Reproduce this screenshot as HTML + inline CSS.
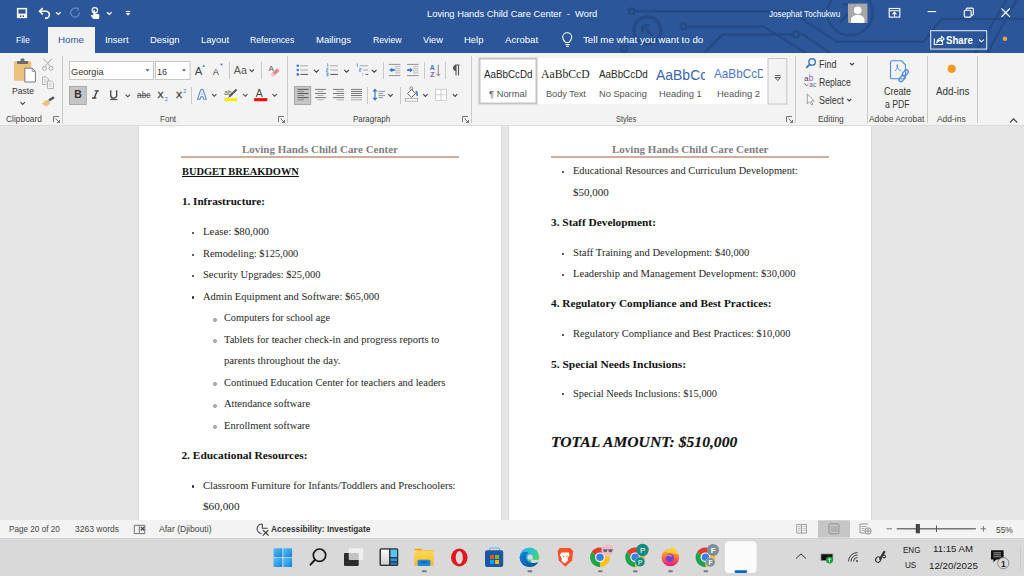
<!DOCTYPE html>
<html><head><meta charset="utf-8">
<style>
*{margin:0;padding:0;box-sizing:border-box}
html,body{width:1024px;height:576px;overflow:hidden;background:#e6e6e6;font-family:"Liberation Sans",sans-serif}
.a{position:absolute;white-space:nowrap}
#title{position:absolute;left:0;top:0;width:1024px;height:53px;background:#2b579a}
#ribbon{position:absolute;left:0;top:53px;width:1024px;height:73px;background:#f3f3f3;border-bottom:1px solid #dcdcdc}
#doc{position:absolute;left:0;top:126px;width:1024px;height:394px;background:#e6e6e6}
.page{position:absolute;top:126px;width:362px;height:394px;background:#fff;box-shadow:-1px 0 0 #dcdcdc,1px 0 0 #dcdcdc}
#status{position:absolute;left:0;top:520px;width:1024px;height:18px;background:#f3f3f3}
#task{position:absolute;left:0;top:538px;width:1024px;height:38px;background:#d9d9d9;border-top:1px solid #d0d0d0}
.tt{color:#fff;font-size:10px}
.tab{color:#fff;font-size:10.5px;top:34px}
.gl{font-size:9px;color:#444;top:115px}
.sep{position:absolute;width:1px;background:#c8c8c8}
.d{position:absolute;white-space:nowrap;font-family:"Liberation Serif",serif;color:#1a1a1a;font-size:10px}
.b{font-weight:bold}
.hdr{font-family:"Liberation Serif",serif;font-weight:bold;color:#808080;font-size:10px}
.st{font-size:9px;color:#444}
.u{position:absolute;white-space:nowrap;line-height:1;transform-origin:0 0;font-family:"Liberation Sans",sans-serif}
.d{line-height:1}
.d{transform-origin:0 0}
.bul{position:absolute;width:2.3px;height:2.3px;background:#2a2a2a;border-radius:50%}
.sub{position:absolute;width:3.8px;height:3.8px;background:#b8b8b8;border:0.7px solid #999;border-radius:50%}
</style></head><body>
<div id="title"></div>
<svg class="a" style="left:0;top:0" width="1024" height="53" viewBox="0 0 1024 53">
 <g fill="none" stroke="#244b86" stroke-width="2.5">
  <circle cx="631.7" cy="11.3" r="2.8"/>
  <path d="M634.5 11.3H790L837 41.8H923.6L941.5 19H1024"/>
  <circle cx="647.3" cy="30.3" r="13.5" stroke-width="3.2"/>
  <path d="M642.5 25.5l10 10M642.5 25.5v7M642.5 25.5h7" stroke-width="3"/>
  <circle cx="683.5" cy="26.4" r="2.8"/>
  <path d="M686.3 26.4H763.4L806 53"/>
  <circle cx="624" cy="48.8" r="2.8"/>
  <path d="M704 53L722.5 34.6H793.2"/>
  <circle cx="796" cy="34.6" r="2.8"/>
  <path d="M798.8 34.6H803.3L830 53"/>
  <circle cx="850" cy="13" r="22.5"/>
  <path d="M840 23L855 6M843 4.5h12v10"/>
  <path d="M975.3 53L1006.3 0M987.3 53L1016.5 0"/>
 </g>
 <!-- QAT save -->
 <rect x="16.9" y="7.9" width="10.2" height="10.2" fill="#fff"/>
 <rect x="18.4" y="9.4" width="7.2" height="4.2" fill="#2b579a"/>
 <rect x="20" y="15.3" width="1.3" height="1.8" fill="#2b579a"/><rect x="22.7" y="15.3" width="1.3" height="1.8" fill="#2b579a"/>
 <!-- undo -->
 <path d="M39.8 11.3H46a3.4 3.4 0 0 1 0 6.8H45" fill="none" stroke="#fff" stroke-width="1.6"/>
 <path d="M42.8 8.1L39.6 11.3L42.8 14.5" fill="none" stroke="#fff" stroke-width="1.6"/>
 <path d="M56 12.2l2.3 2.2 2.3-2.2" fill="none" stroke="#fff" stroke-width="1.3"/>
 <!-- redo faded -->
 <path d="M79.4 12.2a4.4 4.4 0 1 1 -2.6 -3.6" fill="none" stroke="#5e86c0" stroke-width="1.3"/><path d="M76.3 7.6l2.2 1.2-1.3 2.2" fill="none" stroke="#5e86c0" stroke-width="1.2"/>
 <!-- touch mode -->
 <circle cx="94.8" cy="10.3" r="2.7" fill="none" stroke="#fff" stroke-width="1.1"/>
 <path d="M93.4 19L91 15.9Q90.5 15 91.5 14.7L93.3 15.6V10.8Q93.3 9.9 94.2 9.9Q95.1 9.9 95.1 10.8V13.4L98.2 14.1Q99.6 14.5 99.4 16L99 19Z" fill="#fff"/>
 <path d="M107 12.2l2.3 2.2 2.3-2.2" fill="none" stroke="#fff" stroke-width="1.3"/>
 <!-- customize -->
 <path d="M125.8 11.4h4.4" stroke="#fff" stroke-width="1"/>
 <path d="M125.6 13h4.8l-2.4 2.6z" fill="#fff"/>
 <!-- avatar -->
 <rect x="848" y="3.6" width="19.4" height="19.3" fill="#a8a8a8"/>
 <circle cx="857.7" cy="10.2" r="3.8" fill="#fff"/>
 <path d="M851 22.9v-3.2c0-3 3-4.8 6.7-4.8s6.7 1.8 6.7 4.8v3.2z" fill="#fff"/>
 <!-- ribbon display options -->
 <g fill="none" stroke="#fff" stroke-width="1.1">
  <rect x="889.2" y="8.5" width="10.6" height="8.6"/>
  <path d="M889.2 10.8h10.6M894.5 16.6v-4.2M892.5 14.3l2-2 2 2"/>
 </g>
 <!-- min restore close -->
 <path d="M927.6 11.6h8.6" stroke="#fff" stroke-width="1.1"/>
 <g fill="none" stroke="#fff" stroke-width="1.1">
  <rect x="964.3" y="10.3" width="6.8" height="6.8" rx="1"/>
  <path d="M966.3 10.3v-1.2a1 1 0 0 1 1-1h5a1 1 0 0 1 1 1v5a1 1 0 0 1-1 1h-1.2"/>
  <path d="M1001.5 8.5l8.4 8.4M1009.9 8.5l-8.4 8.4"/>
 </g>
 <!-- share -->
 <rect x="930.7" y="30.7" width="56" height="18.4" fill="none" stroke="#e8eef7" stroke-width="1"/>
 <g fill="none" stroke="#fff" stroke-width="1.1">
  <path d="M934.3 38.5v6h8.2v-3.3"/>
  <path d="M936.8 42.8c0.3-3 2.2-4.6 4.6-4.6v-1.9l2.8 2.6-2.8 2.6v-1.6c-1.8 0-3.3 1-4.6 2.9z" stroke-linejoin="round"/>
 </g>
 <path d="M979 39.6l2.4 2.2 2.4-2.2" fill="none" stroke="#fff" stroke-width="1.1"/>
 <circle cx="1004.9" cy="38.8" r="2.2" fill="#f2a33a"/>
 <!-- lightbulb -->
 <g fill="none" stroke="#fff" stroke-width="1.1">
  <path d="M565.5 42.5c-1.2-1.4-2.8-2.8-2.8-5.2a4.5 4.5 0 0 1 9 0c0 2.4-1.6 3.8-2.8 5.2z"/>
  <path d="M565.5 44.5h4M566 46.3h3"/>
 </g>
</svg>
<!-- tabs -->
<div class="a" style="left:48px;top:27px;width:47px;height:26px;background:#f3f3f3"></div>

<div id="ribbon"></div>
<!--RIB-->
<svg class="a" style="left:0;top:0" width="1024" height="130" viewBox="0 0 1024 130">
 <!-- separators -->
 <g stroke="#c9c9c9" stroke-width="1">
  <path d="M62.5 56V123M287.5 56V123M471.5 56V123M795.5 56V123M867.5 56V123M927.5 56V123M977.5 56V123"/>
  <path d="M229.5 62V79M261.5 62V79M191.5 87V104M383.5 62V79M424.5 62V79M445.5 62V79M367.5 87V104M400.5 87V104"/>
 </g>
 <!-- Paste -->
 <rect x="14" y="61.3" width="17.3" height="19.5" rx="1.2" fill="#ebc27e"/>
 <rect x="17" y="61" width="11.2" height="3" rx="0.8" fill="#6b6b6b"/>
 <rect x="20.6" y="58.6" width="3.8" height="3" rx="1" fill="#6b6b6b"/>
 <path d="M24.8 68.2H32.2L35.4 71.4V82H24.8Z" fill="#fff" stroke="#7a7a7a" stroke-width="1"/>
 <path d="M32.2 68.2V71.4H35.4" fill="none" stroke="#7a7a7a" stroke-width="0.8"/>
 <path d="M20.5 102.2l2.2 2.2 2.2-2.2" fill="none" stroke="#444" stroke-width="1.1"/>
 <!-- cut -->
 <g fill="none" stroke="#a8a8a8" stroke-width="1">
  <path d="M43.5 58.5L50.5 66.5M52 58.5L45 66.5"/>
  <circle cx="44.5" cy="68.3" r="1.9"/><circle cx="51" cy="68.3" r="1.9"/>
 </g>
 <!-- copy -->
 <g fill="#f3f3f3" stroke="#b0b0b0" stroke-width="0.9">
  <path d="M42.5 77H46.5L48.5 79V84.5H42.5Z"/>
  <path d="M47.5 81H51.5L53.5 83V88.5H47.5Z"/>
  <path d="M43.8 80h3M43.8 82h3M48.8 84h3M48.8 86h3" stroke-width="0.6"/>
 </g>
 <!-- format painter -->
 <path d="M48.2 99.6L53.2 96.2L54.6 98.2L49.6 101.6Z" fill="#555"/>
 <path d="M46.8 99.8L50.2 103.4L46 106.8L41.6 103.4Z" fill="#ebc27e"/>
 <path d="M47.6 100.6L49.2 102.4" stroke="#c99a4e" stroke-width="0.8"/>
 <!-- font boxes -->
 <rect x="69.5" y="61.5" width="84" height="18" fill="#fff" stroke="#c6c6c6"/>
 <rect x="155.5" y="61.5" width="34.5" height="18" fill="#fff" stroke="#c6c6c6"/>
 <path d="M145.5 69.3h4l-2 2.2z" fill="#555"/>
 <path d="M182 69.3h4l-2 2.2z" fill="#555"/>
 <!-- grow / shrink -->
 <text x="194.8" y="74.8" font-family="Liberation Sans" font-size="11.3" fill="#444">A</text>
 <path d="M202.2 66.8h3l-1.5-2z" fill="#3c78c8"/>
 <text x="212.8" y="74.8" font-family="Liberation Sans" font-size="9.3" fill="#444">A</text>
 <path d="M220 63.8h3l-1.5 2z" fill="#3c78c8"/>
 <text x="233.8" y="73.5" font-family="Liberation Sans" font-size="10" fill="#555" textLength="13" lengthAdjust="spacingAndGlyphs">Aa</text>
 <path d="M249.6 69.4l2.2 2.2 2.2-2.2" fill="none" stroke="#444" stroke-width="1.1"/>
 <!-- clear formatting -->
 <text x="268.5" y="70.7" font-family="Liberation Sans" font-size="8" fill="#555">A</text>
 <path d="M272.5 72.5L277 68.2L279.5 70.8L275 75.2Z" fill="#e8848c"/>
 <path d="M270.5 74.5L272.5 72.5L275 75.2L273 77Z" fill="#f4c0c4"/>
 <!-- B I U -->
 <rect x="69.5" y="86.5" width="16.8" height="18" fill="#c5c5c5" stroke="#ababab"/>
 <text x="74.2" y="98.2" font-family="Liberation Sans" font-weight="bold" font-size="10.4" fill="#333">B</text>
 <path d="M94.6 90.9H98.9M92 98H96.3M97.1 90.9L94.2 98" stroke="#444" stroke-width="1.4" fill="none"/>
 <path d="M110.7 90.3V95.2a3 3 0 0 0 6 0V90.3" fill="none" stroke="#444" stroke-width="1.3"/>
 <path d="M110 99.6h7.4" stroke="#444" stroke-width="1"/>
 <path d="M125.6 94.6l2.2 2.2 2.2-2.2" fill="none" stroke="#444" stroke-width="1.1"/>
 <text x="137" y="98" font-family="Liberation Sans" font-size="9.4" fill="#555" textLength="13.5" lengthAdjust="spacingAndGlyphs">abc</text>
 <path d="M137 95.3h13.6" stroke="#555" stroke-width="1"/>
 <text x="157.6" y="98.3" font-family="Liberation Sans" font-size="9" fill="#444" stroke="#444" stroke-width="0.35">X</text>
 <text x="164.8" y="100.8" font-family="Liberation Sans" font-size="5.5" fill="#3c78c8">2</text>
 <text x="176" y="98.3" font-family="Liberation Sans" font-size="9" fill="#444" stroke="#444" stroke-width="0.35">X</text>
 <text x="183.3" y="93.4" font-family="Liberation Sans" font-size="5.5" fill="#3c78c8">2</text>
 <!-- text effects -->
 <path d="M197.6 99.2L200.7 89.8Q201.9 88.8 203.1 89.8L206.2 99.2H203.7L202.9 96.7H200.9L200.1 99.2Z" fill="#f7f9fd" stroke="#4f88d2" stroke-width="1.1" stroke-linejoin="round"/>
 <path d="M201.2 94.8H202.6L201.9 92.4Z" fill="#4f88d2"/>
 <path d="M212.2 94.2l2.1 2.1 2.1-2.1" fill="none" stroke="#444" stroke-width="1.1"/>
 <!-- highlighter -->
 <text x="224.3" y="95" font-family="Liberation Sans" font-size="6.5" fill="#555">ab</text>
 <path d="M236.5 89.5L229.5 96.5" stroke="#555" stroke-width="2"/>
 <path d="M230 96L228.3 97.6" stroke="#555" stroke-width="1"/>
 <rect x="224.5" y="98.1" width="12.7" height="3.1" fill="#f6f000"/>
 <path d="M243.2 94.2l2.1 2.1 2.1-2.1" fill="none" stroke="#444" stroke-width="1.1"/>
 <!-- font color -->
 <text x="255.8" y="97.4" font-family="Liberation Sans" font-size="10.4" fill="#444">A</text>
 <rect x="254.2" y="98.1" width="13.1" height="3.1" fill="#ee1111"/>
 <path d="M272.6 94.2l2.1 2.1 2.1-2.1" fill="none" stroke="#444" stroke-width="1.1"/>
 <!-- launchers -->
 <g fill="none" stroke="#666" stroke-width="0.9">
  <path d="M53.5 122V116.5H59M55.5 118.5L59.5 122.5M59.5 120v2.5H57"/>
  <path d="M278.5 122V116.5H284M280.5 118.5L284.5 122.5M284.5 120v2.5H282"/>
  <path d="M462.5 122V116.5H468M464.5 118.5L468.5 122.5M468.5 120v2.5H466"/>
  <path d="M786.5 122V116.5H792M788.5 118.5L792.5 122.5M792.5 120v2.5H790"/>
 </g>
 <!-- bullets -->
 <g fill="#3c78c8"><circle cx="297.8" cy="65.8" r="1.3"/><circle cx="297.8" cy="70" r="1.3"/><circle cx="297.8" cy="74.4" r="1.3"/></g>
 <g stroke-width="1"><path d="M300.3 65.8h7.8M300.3 70h7.8" stroke="#a8a8a8"/><path d="M300.3 74.4h7.8" stroke="#555"/></g>
 <path d="M314 69.8l2.4 2.4 2.4-2.4" fill="none" stroke="#444" stroke-width="1.1"/>
 <!-- numbering -->
 <g fill="none" stroke="#4a84cf" stroke-width="0.7"><path d="M327 64.2l0.8-0.5v3.6M326.4 68.6h1.6v1.4h-1.6v1.6h1.8M326.4 72.8h1.7v1.5h-1.2M326.4 74.3h1.7v1.7h-1.8"/></g>
 <g stroke-width="1"><path d="M330.2 65.8h7.8M330.2 70h7.8" stroke="#a8a8a8"/><path d="M330.2 74.4h7.8" stroke="#555"/></g>
 <path d="M344.2 69.8l2.4 2.4 2.4-2.4" fill="none" stroke="#444" stroke-width="1.1"/>
 <!-- multilevel -->
 <g fill="none" stroke="#4a84cf" stroke-width="0.7"><path d="M356.6 64.2l0.8-0.5v3.3M359.4 68.5h1.6v1.3h-1.6v1.5h1.8"/><path d="M362.6 72.8v3" stroke="#9ab8e0"/></g>
 <g stroke-width="1"><path d="M359.5 65.8h8.5M363 70h5" stroke="#a8a8a8"/><path d="M365.5 74.4h2.8" stroke="#555"/></g>
 <path d="M371.8 69.8l2.4 2.4 2.4-2.4" fill="none" stroke="#444" stroke-width="1.1"/>
 <!-- indents -->
 <g stroke-width="0.9">
  <path d="M388.8 64.4h11.6M388.8 75.6h11.6M407 64.4h11.6M407 75.6h11.6" stroke="#888"/>
  <path d="M395 66.6h5.4M395 68.7h5.4M395 70.8h5.4M395 72.9h5.4M413 66.6h5.4M413 68.7h5.4M413 70.8h5.4M413 72.9h5.4" stroke="#b4b4b4"/>
 </g>
 <path d="M389.3 70l3-2.6v1.6h2.5v2h-2.5v1.6z" fill="#3c78c8"/>
 <path d="M412.8 70l-3-2.6v1.6h-2.6v2h2.6v1.6z" fill="#3c78c8"/>
 <!-- sort -->
 <text x="429.8" y="70" font-family="Liberation Sans" font-weight="bold" font-size="7" fill="#3c78c8">A</text>
 <text x="430.3" y="76.5" font-family="Liberation Sans" font-weight="bold" font-size="7" fill="#9050c0">Z</text>
 <path d="M438.3 64.8V75.8M436.5 73.8l1.8 2 1.8-2" fill="none" stroke="#777" stroke-width="0.9"/>
 <!-- pilcrow -->
 <path d="M455 65h4.5M456 65v10.6M458.5 65v10.6" stroke="#555" stroke-width="1.1"/>
 <path d="M456 65a3 3 0 0 0 0 6z" fill="#555"/>
 <!-- align buttons -->
 <rect x="294.5" y="86.5" width="16.2" height="18" fill="#c5c5c5" stroke="#ababab"/>
 <g stroke-width="1">
  <path d="M297.5 89.4h11M297.5 93.5h11M297.5 97.6h11" stroke="#555"/>
  <path d="M297.5 91.5h6.5M297.5 95.5h6.5M297.5 99.8h6.5" stroke="#888"/>
  <path d="M315 89.4h11M315 93.5h11M315 97.6h11" stroke="#777"/><path d="M317.5 91.5h6M317.5 95.5h6M317.5 99.8h6" stroke="#aaa"/>
  <path d="M333 89.4h11M333 93.5h11M333 97.6h11" stroke="#777"/><path d="M336.5 91.5h7.5M336.5 95.5h7.5M336.5 99.8h7.5" stroke="#aaa"/>
  <path d="M351 89.4h11M351 91.5h11M351 93.5h11M351 95.5h11" stroke="#777"/><path d="M351 97.6h11M351 99.8h11" stroke="#aaa"/>
 </g>
 <!-- line spacing -->
 <path d="M375 88.6l-2.6 3h5.2zM375 100.8l-2.6-3h5.2z" fill="#3c78c8"/>
 <path d="M375 91v7" stroke="#3c78c8" stroke-width="1.2"/>
 <path d="M378.5 91.4h6.5M378.5 93.5h4.5M378.5 95.6h6.5M378.5 97.6h4.5" stroke="#888" stroke-width="0.9"/>
 <path d="M388.3 94.2l2.2 2.2 2.2-2.2" fill="none" stroke="#444" stroke-width="1.1"/>
 <!-- shading -->
 <path d="M407.5 93.5L411.5 89.5L415.5 93.5L411.5 97.5Z" fill="#fff" stroke="#555" stroke-width="0.9"/>
 <path d="M410 89.8v-1.8a1.3 1.3 0 0 1 2.6 0v2.5" fill="none" stroke="#666" stroke-width="0.7"/>
 <path d="M415.8 91.2c1.2 1 1.6 2.6 1.2 4.8" fill="none" stroke="#3c78c8" stroke-width="1.5"/>
 <rect x="405.3" y="98.5" width="12.4" height="2.6" fill="#fff" stroke="#999" stroke-width="0.7"/>
 <path d="M423.2 94.2l2.2 2.2 2.2-2.2" fill="none" stroke="#444" stroke-width="1.1"/>
 <!-- borders -->
 <rect x="435.5" y="89.3" width="11" height="11" fill="#fff" stroke="#c8c8c8" stroke-width="0.9"/>
 <path d="M441 89.3v11M435.5 94.8h11" stroke="#c8c8c8" stroke-width="0.9"/>
 <path d="M452.9 94.2l2.2 2.2 2.2-2.2" fill="none" stroke="#444" stroke-width="1.1"/>
 <!-- styles gallery -->
 <rect x="479" y="58" width="289" height="46" fill="#fff"/>
 <rect x="479.5" y="58.5" width="57" height="45" fill="#fff" stroke="#c4c4c4" stroke-width="2"/>
 <rect x="768" y="58.5" width="18.8" height="45.5" fill="#f3f3f3" stroke="#c6c6c6" stroke-width="1"/>
 <path d="M775 75.5h5.5" stroke="#444" stroke-width="0.9"/>
 <path d="M775 77.5h5.5l-2.75 3z" fill="none" stroke="#444" stroke-width="0.9"/>
 <!-- find/replace/select -->
 <circle cx="812.1" cy="61.9" r="3.2" fill="none" stroke="#3a75c4" stroke-width="1.4"/>
 <path d="M809.8 64.3L806.2 67.9" stroke="#3a75c4" stroke-width="1.8"/>
 <path d="M850 63l2 2 2-2" fill="none" stroke="#444" stroke-width="1.1"/>
 <text x="804.3" y="81.4" font-family="Liberation Sans" font-size="7.6" fill="#444">a</text>
 <text x="808.8" y="81.4" font-family="Liberation Sans" font-size="8.2" fill="#9a5dc8">b</text>
 <text x="809.3" y="86.6" font-family="Liberation Sans" font-size="6.6" fill="#666">a</text>
 <text x="813" y="86.6" font-family="Liberation Sans" font-size="6.6" fill="#3c78c8">c</text>
 <path d="M804.6 83.2l1.8 2.6 2-1.6" fill="none" stroke="#3c78c8" stroke-width="0.9"/>
 <path d="M807.3 94V104L809.6 101.7L811.6 105L813 104.3L811 101H814.4Z" fill="#fbfbfb" stroke="#8a8a8a" stroke-width="0.8"/>
 <path d="M847.3 99l2 2 2-2" fill="none" stroke="#444" stroke-width="1.1"/>
 <!-- create pdf -->
 <path d="M892.3 60.8H901.5L905.5 64.8V77a1.8 1.8 0 0 1 -1.8 1.8H892.3a1.8 1.8 0 0 1 -1.8 -1.8V62.6a1.8 1.8 0 0 1 1.8 -1.8Z" fill="none" stroke="#4a8ae0" stroke-width="1.1"/>
 <path d="M895 71c1.5-1.2 2.8-3.5 2.7-5.8c-0.1-1-1-0.8-0.9 0.3c0.3 2.2 1.8 4.4 4.4 5.5" fill="none" stroke="#4a8ae0" stroke-width="0.9"/>
 <g fill="none" stroke="#4a8ae0" stroke-width="1.3">
  <rect x="903.3" y="69.5" width="4" height="7" rx="2" transform="rotate(40 905.3 73)"/>
  <rect x="900" y="75" width="4" height="7" rx="2" transform="rotate(40 902 78.5)"/>
 </g>
 <!-- addins dot -->
 <circle cx="951.7" cy="68.8" r="4.1" fill="#f39a1e"/>
 <path d="M1010 122.5l3.6-3.6 3.6 3.6" fill="none" stroke="#444" stroke-width="1.1"/>
</svg>

<!--/RIB-->

<div class="page" style="left:139px"></div>
<div class="page" style="left:509px"></div>
<div class="a" style="left:181px;top:156px;width:278px;height:2px;background:#d0ae98"></div>
<div class="a" style="left:551px;top:156px;width:278px;height:2px;background:#d0ae98"></div>
<!--DOC-->
<div class="d" style="left:242.0px;top:143.9px;font-size:11.4px;font-weight:bold;color:#7f7f7f;transform:scaleX(0.964)">Loving Hands Child Care Center</div>
<div class="d" style="left:181.6px;top:165.8px;font-size:11.4px;font-weight:bold;color:#111;text-decoration:underline;transform:scaleX(0.913)">BUDGET BREAKDOWN</div>
<div class="d" style="left:181.6px;top:196.2px;font-size:11.4px;font-weight:bold;color:#111;transform:scaleX(0.973)">1. Infrastructure:</div>
<div class="d" style="left:203.0px;top:226.0px;font-size:11.4px;color:#262626;transform:scaleX(0.948)">Lease: $80,000</div>
<div class="d" style="left:203.0px;top:247.9px;font-size:11.4px;color:#262626;transform:scaleX(0.913)">Remodeling: $125,000</div>
<div class="d" style="left:203.0px;top:269.4px;font-size:11.4px;color:#262626;transform:scaleX(0.921)">Security Upgrades: $25,000</div>
<div class="d" style="left:203.0px;top:290.8px;font-size:11.4px;color:#262626;transform:scaleX(0.924)">Admin Equipment and Software: $65,000</div>
<div class="d" style="left:224.0px;top:312.4px;font-size:11.4px;color:#262626;transform:scaleX(0.903)">Computers for school age</div>
<div class="d" style="left:224.0px;top:333.6px;font-size:11.4px;color:#262626;transform:scaleX(0.922)">Tablets for teacher check-in and progress reports to</div>
<div class="d" style="left:224.0px;top:355.1px;font-size:11.4px;color:#262626;transform:scaleX(0.940)">parents throughout the day.</div>
<div class="d" style="left:224.0px;top:376.8px;font-size:11.4px;color:#262626;transform:scaleX(0.921)">Continued Education Center for teachers and leaders</div>
<div class="d" style="left:224.0px;top:398.3px;font-size:11.4px;color:#262626;transform:scaleX(0.916)">Attendance software</div>
<div class="d" style="left:224.0px;top:419.8px;font-size:11.4px;color:#262626;transform:scaleX(0.922)">Enrollment software</div>
<div class="d" style="left:181.4px;top:449.8px;font-size:11.4px;font-weight:bold;color:#111;transform:scaleX(1.000)">2. Educational Resources:</div>
<div class="d" style="left:202.8px;top:479.8px;font-size:11.4px;color:#262626;transform:scaleX(0.932)">Classroom Furniture for Infants/Toddlers and Preschoolers:</div>
<div class="d" style="left:203.0px;top:501.1px;font-size:11.4px;color:#262626;transform:scaleX(0.986)">$60,000</div>
<div class="d" style="left:611.8px;top:143.9px;font-size:11.4px;font-weight:bold;color:#7f7f7f;transform:scaleX(0.967)">Loving Hands Child Care Center</div>
<div class="d" style="left:572.8px;top:165.4px;font-size:11.4px;color:#262626;transform:scaleX(0.913)">Educational Resources and Curriculum Development:</div>
<div class="d" style="left:573.0px;top:187.1px;font-size:11.4px;color:#262626;transform:scaleX(0.969)">$50,000</div>
<div class="d" style="left:551.4px;top:216.9px;font-size:11.4px;font-weight:bold;color:#111;transform:scaleX(0.996)">3. Staff Development:</div>
<div class="d" style="left:573.0px;top:247.1px;font-size:11.4px;color:#262626;transform:scaleX(0.928)">Staff Training and Development: $40,000</div>
<div class="d" style="left:573.0px;top:268.2px;font-size:11.4px;color:#262626;transform:scaleX(0.929)">Leadership and Management Development: $30,000</div>
<div class="d" style="left:551.4px;top:298.1px;font-size:11.4px;font-weight:bold;color:#111;transform:scaleX(0.990)">4. Regulatory Compliance and Best Practices:</div>
<div class="d" style="left:573.0px;top:328.4px;font-size:11.4px;color:#262626;transform:scaleX(0.914)">Regulatory Compliance and Best Practices: $10,000</div>
<div class="d" style="left:551.4px;top:358.6px;font-size:11.4px;font-weight:bold;color:#111;transform:scaleX(1.007)">5. Special Needs Inclusions:</div>
<div class="d" style="left:573.0px;top:387.6px;font-size:11.4px;color:#262626;transform:scaleX(0.914)">Special Needs Inclusions: $15,000</div>
<div class="d" style="left:551.4px;top:435.1px;font-size:14.2px;font-weight:bold;font-style:italic;color:#111;-webkit-text-stroke:0.15px #111;transform:scaleX(1.102)">TOTAL AMOUNT: $510,000</div>
<div class="bul" style="left:192px;top:231.6px"></div>
<div class="bul" style="left:192px;top:253.6px"></div>
<div class="bul" style="left:192px;top:275.1px"></div>
<div class="bul" style="left:192px;top:296.4px"></div>
<div class="bul" style="left:192px;top:485.4px"></div>
<div class="bul" style="left:562px;top:171.0px"></div>
<div class="bul" style="left:562px;top:252.8px"></div>
<div class="bul" style="left:562px;top:273.8px"></div>
<div class="bul" style="left:562px;top:334.1px"></div>
<div class="bul" style="left:562px;top:393.2px"></div>
<div class="sub" style="left:213.1px;top:318.0px"></div>
<div class="sub" style="left:213.1px;top:339.2px"></div>
<div class="sub" style="left:213.1px;top:382.4px"></div>
<div class="sub" style="left:213.1px;top:403.9px"></div>
<div class="sub" style="left:213.1px;top:425.4px"></div>
<!--/DOC-->

<div id="status"></div>
<div id="task"></div>
<!--BOT-->
<svg class="a" style="left:0;top:515px" width="1024" height="61" viewBox="0 515 1024 61">
 <defs>
  <linearGradient id="win" x1="0" y1="0" x2="1" y2="1"><stop offset="0" stop-color="#52c5f8"/><stop offset="1" stop-color="#1a7fdf"/></linearGradient>
  <linearGradient id="fold" x1="0" y1="0" x2="0" y2="1"><stop offset="0" stop-color="#ffd95a"/><stop offset="1" stop-color="#f3b92a"/></linearGradient>
  <linearGradient id="edge1" x1="0" y1="0" x2="1" y2="0.6"><stop offset="0" stop-color="#2fb1ee"/><stop offset="0.55" stop-color="#2cc3c9"/><stop offset="1" stop-color="#55d85a"/></linearGradient><linearGradient id="edge2" x1="0" y1="0" x2="1" y2="1"><stop offset="0" stop-color="#1583dc"/><stop offset="1" stop-color="#0b4d98"/></linearGradient>
  <linearGradient id="ff" x1="0" y1="0" x2="0" y2="1"><stop offset="0" stop-color="#ffbd2e"/><stop offset="0.5" stop-color="#ff7139"/><stop offset="1" stop-color="#e31587"/></linearGradient>
  <linearGradient id="wid" x1="0" y1="0" x2="0" y2="1"><stop offset="0" stop-color="#fafafa"/><stop offset="1" stop-color="#cfcfcf"/></linearGradient>
 </defs>
 <!-- status icons -->
 <g fill="none" stroke="#666" stroke-width="0.9">
  <path d="M134.3 525.3h5v8.3h-5zM139.3 525.3h5.5v8.3h-5.5"/>
  <path d="M140.8 527l3.5 3.5M144.3 527l-3.5 3.5" stroke="#444" stroke-width="1.1"/>
 </g>
 <g fill="none" stroke="#444" stroke-width="1.1">
  <path d="M262.3 524A4.8 4.8 0 0 0 261.5 533.6"/>
  <path d="M262.3 524V528.3H267.5"/>
  <path d="M263 530.2L268.6 535.6M268.3 530.2L262.8 535.6" stroke-width="1.3"/>
 </g>
 <!-- view buttons -->
 <g fill="none" stroke="#999" stroke-width="0.9">
  <path d="M796.7 524.5h4.8v8.6h-4.8zM801.5 524.5h5v8.6h-5z"/>
  <path d="M798 526.5h2.5M798 528.5h2.5M798 530.5h2.5M803 526.5h2.5M803 528.5h2.5M803 530.5h2.5" stroke-width="0.6"/>
 </g>
 <rect x="818" y="520.3" width="32" height="17.3" fill="#c6c6c6"/>
 <g fill="none" stroke="#8e8e8e" stroke-width="0.9">
  <rect x="828.9" y="523.8" width="10" height="10" rx="1"/>
  <path d="M830.5 527h7M830.5 529h7M830.5 531h7" stroke-width="0.7"/>
 </g>
 <g fill="none" stroke="#8e8e8e" stroke-width="0.9">
  <path d="M868 524h-8v9h6"/><path d="M861.5 526.5h5M861.5 528.5h3M861.5 530.5h3" stroke-width="0.7"/>
  <circle cx="868" cy="531" r="3.2" fill="#f3f3f3"/>
  <path d="M865 531h6M868 528v6"/>
 </g>
 <path d="M886.5 528.8h5.5" stroke="#777" stroke-width="1"/>
 <path d="M896.7 528.8h79.2" stroke="#777" stroke-width="1.4"/>
 <rect x="915.8" y="524" width="4.1" height="9.3" fill="#444"/>
 <path d="M936.5 525.5v6.5" stroke="#555" stroke-width="1"/>
 <path d="M980.6 528.8h5.5M983.35 526v5.6" stroke="#777" stroke-width="1"/>
 <!-- taskbar -->
 <g fill="url(#win)">
  <rect x="273.5" y="548.3" width="8.8" height="8.9" rx="0.8"/><rect x="283.2" y="548.3" width="8.9" height="8.9" rx="0.8"/>
  <rect x="273.5" y="558.1" width="8.8" height="8.9" rx="0.8"/><rect x="283.2" y="558.1" width="8.9" height="8.9" rx="0.8"/>
 </g>
 <circle cx="319.5" cy="555.2" r="6.2" fill="none" stroke="#1c1c1c" stroke-width="1.7"/>
 <path d="M315 559.8L310.5 564.6" stroke="#1c1c1c" stroke-width="2" stroke-linecap="round"/>
 <rect x="344" y="553" width="14.7" height="13" rx="1" fill="#2b2b2b"/>
 <rect x="348.7" y="548.3" width="14.5" height="11.8" rx="1" fill="#f7f7f7" opacity="0.75"/>
 <rect x="379.5" y="548.3" width="18.8" height="17.7" rx="1.5" fill="#333"/>
 <rect x="381" y="549.6" width="8" height="15" fill="url(#wid)"/>
 <rect x="390.5" y="549.6" width="6.5" height="7.4" fill="#50c8fa"/>
 <rect x="390.5" y="558.4" width="6.5" height="2.8" fill="#2b95e0"/>
 <rect x="390.5" y="562.3" width="6.5" height="2.6" fill="#1874d0"/>
 <!-- explorer -->
 <path d="M414.3 550a1.3 1.3 0 0 1 1.3-1.3h5.2l1.6 1.6h9.9a1.3 1.3 0 0 1 1.3 1.3v2z" fill="#e6a31a"/>
 <rect x="414.3" y="550.6" width="19.4" height="15.5" rx="1.3" fill="url(#fold)"/>
 <rect x="417.6" y="559.8" width="12.8" height="6.3" rx="1.6" fill="#1f86d8"/>
 <path d="M420.5 562.3h7" stroke="#0b4f9c" stroke-width="0.9"/>
 <!-- opera -->
 <ellipse cx="459.3" cy="557.5" rx="8.3" ry="8.9" fill="#e4161e"/>
 <ellipse cx="459.3" cy="557.5" rx="3.6" ry="6.5" fill="#d9d9d9"/>
 <!-- store -->
 <path d="M489.5 551.5v-2a1.5 1.5 0 0 1 1.5-1.5h7a1.5 1.5 0 0 1 1.5 1.5v2" fill="none" stroke="#5fb8ef" stroke-width="1.1"/>
 <rect x="485" y="550.3" width="18.2" height="16.7" rx="2" fill="#1c57a6"/>
 <rect x="490" y="555" width="4" height="4" fill="#f25022"/><rect x="495" y="555" width="4" height="4" fill="#7fba00"/>
 <rect x="490" y="560" width="4" height="4" fill="#00a4ef"/><rect x="495" y="560" width="4" height="4" fill="#ffb900"/>
 <!-- edge -->
 <circle cx="529.5" cy="557.2" r="9.8" fill="url(#edge1)"/>
 <path d="M531 559.3C533.5 560.3 536.5 560.3 539.6 559.5L541 569H532Z" fill="#d9d9d9"/>
 <path d="M519.7 557C519.7 563 524 567 529.5 567C533.5 567 536.8 565 538.5 562C535 563.5 530.5 563.5 527.8 561C525.3 558.8 525.5 554.5 528.8 552.8C525 550.5 520.5 552.5 519.7 557Z" fill="url(#edge2)"/>
 <circle cx="530.2" cy="557.2" r="2.6" fill="#d9d9d9"/>
 <!-- brave -->
 <path d="M559.5 548h10.8l2.8 3.2-1 9-6.7 6.6-6.7-6.6-1-9z" fill="#fb4f25"/>
 <path d="M561.5 552.5h7.3l0.8 2.5-2 3.3 0.5 2.3-3.4 2.8-3.4-2.8 0.5-2.3-2-3.3z" fill="#fff"/>
 <path d="M563 555.5l1 1.5M567.5 555.5l-1 1.5" stroke="#fb4f25" stroke-width="0.9"/>
 <!-- chrome x3 -->
 <path d="M600.00 557.30L591.43 552.35A9.9 9.9 0 0 1 608.57 552.35Z" fill="#e33b2e"/>
 <path d="M600.00 557.30L608.57 552.35A9.9 9.9 0 0 1 600.00 567.20Z" fill="#fbc116"/>
 <path d="M600.00 557.30L600.00 567.20A9.9 9.9 0 0 1 591.43 552.35Z" fill="#1ea446"/>
 <circle cx="600" cy="557.3" r="4.9" fill="#fff"/><circle cx="600" cy="557.3" r="3.8" fill="#3b7de9"/>
 <circle cx="607.8" cy="550" r="6.1" fill="#f2b8cc" stroke="#d8d8d8" stroke-width="0.6"/>
 <path d="M602.8 549.8h10" stroke="#555" stroke-width="0.7"/>
 <ellipse cx="605.2" cy="550.8" rx="1.9" ry="1.5" fill="#666"/><ellipse cx="610.4" cy="550.8" rx="1.9" ry="1.5" fill="#666"/>
 <path d="M635.20 557.30L626.63 552.35A9.9 9.9 0 0 1 643.77 552.35Z" fill="#e33b2e"/>
 <path d="M635.20 557.30L643.77 552.35A9.9 9.9 0 0 1 635.20 567.20Z" fill="#fbc116"/>
 <path d="M635.20 557.30L635.20 567.20A9.9 9.9 0 0 1 626.63 552.35Z" fill="#1ea446"/>
 <circle cx="635.2" cy="557.3" r="4.9" fill="#fff"/><circle cx="635.2" cy="557.3" r="3.8" fill="#3b7de9"/>
 <circle cx="642.5" cy="550" r="6.2" fill="#138a7c"/>
 <text x="640.1" y="553.3" font-family="Liberation Sans" font-size="8" fill="#fff">P</text>
 <circle cx="640" cy="561.8" r="5" fill="#138a7c" stroke="#d9d9d9" stroke-width="0.5"/>
 <text x="638.1" y="564.6" font-family="Liberation Sans" font-size="6.5" fill="#fff">P</text>
 <path d="M705.50 557.30L696.93 552.35A9.9 9.9 0 0 1 714.07 552.35Z" fill="#e33b2e"/>
 <path d="M705.50 557.30L714.07 552.35A9.9 9.9 0 0 1 705.50 567.20Z" fill="#fbc116"/>
 <path d="M705.50 557.30L705.50 567.20A9.9 9.9 0 0 1 696.93 552.35Z" fill="#1ea446"/>
 <circle cx="705.5" cy="557.3" r="4.9" fill="#fff"/><circle cx="705.5" cy="557.3" r="3.8" fill="#3b7de9"/>
 <circle cx="713" cy="550" r="6.1" fill="#7e8d98"/>
 <text x="710.8" y="553.3" font-family="Liberation Sans" font-weight="bold" font-size="8" fill="#fff">F</text>
 <circle cx="710.3" cy="562.2" r="4.8" fill="#7e8d98" stroke="#d9d9d9" stroke-width="0.5"/>
 <text x="708.6" y="565" font-family="Liberation Sans" font-weight="bold" font-size="6.5" fill="#fff">F</text>
 <!-- firefox -->
 <circle cx="670.3" cy="557.5" r="8.8" fill="url(#ff)"/>
 <path d="M663 551.5c1.5-1.8 2.5-1 3-0.2c1.5-1.5 4-2 6-1.3c-1-1.5-1.2-2.5-0.5-3.6c3.5 1.6 6.5 4.2 7.2 8" fill="#ffcf3a"/>
 <circle cx="669.8" cy="557.8" r="4.2" fill="#7442d8"/>
 <path d="M665.6 556.5c1.5-1.3 4-1.8 6.2-0.2" fill="none" stroke="#ff9a2e" stroke-width="1.3"/>
 <!-- word active tile -->
 <rect x="725" y="541.2" width="31.5" height="31.7" rx="4" fill="#fbfbfb"/>
 <rect x="734.5" y="570.3" width="12.7" height="2.6" rx="1.3" fill="#0a67c2"/>
 <!-- indicators -->
 <g fill="#7a7a7a">
  <rect x="421.8" y="570.2" width="5" height="2" rx="1"/>
  <rect x="527.4" y="570.2" width="5" height="2" rx="1"/>
  <rect x="598" y="570.2" width="4.6" height="2" rx="1"/>
  <rect x="633" y="570.2" width="4.6" height="2" rx="1"/>
  <rect x="668.2" y="570.2" width="4.6" height="2" rx="1"/>
  <rect x="703.5" y="570.2" width="4.6" height="2" rx="1"/>
 </g>
 <!-- tray -->
 <path d="M796 558.5l5-4.6 5 4.6" fill="none" stroke="#333" stroke-width="1"/>
 <rect x="821" y="554" width="11.8" height="6.4" fill="#111" stroke="#888" stroke-width="0.8"/>
 <circle cx="829.5" cy="560" r="3.5" fill="#17a33a"/>
 <path d="M829.5 562.2v-3.5M828 559.8l1.5-1.5 1.5 1.5" fill="none" stroke="#fff" stroke-width="0.8"/>
 <g fill="none" stroke="#333" stroke-width="0.9">
  <path d="M848.5 561.5a9 9 0 0 1 9-9"/>
  <path d="M851 561.5a6.5 6.5 0 0 1 6.5-6.5"/>
  <path d="M853.5 561.5a4 4 0 0 1 4-4"/>
 </g>
 <circle cx="857" cy="561" r="0.9" fill="#333"/>
 <g fill="none" stroke="#333" stroke-width="1.1">
  <path d="M884.3 551.9L880.2 558.8" stroke-width="2.2" stroke-linecap="round"/>
  <ellipse cx="878.2" cy="559.6" rx="2.5" ry="2.8" transform="rotate(35 878.2 559.6)"/>
  <path d="M882.3 555.3Q886.2 554.6 885.6 557Q884.8 558.2 882.6 557.2"/>
 </g>
 <path d="M991 550.3h12.6v9.1h-7.2l-3 2.8v-2.8H991z" fill="#111"/>
 <path d="M993.5 552.8h7.5M993.5 554.8h7.5M993.5 556.8h7.5" stroke="#ddd" stroke-width="0.7"/>
 <circle cx="1003.3" cy="563.2" r="5.6" fill="#d9d9d9" stroke="#777" stroke-width="0.8"/>
 <text x="1001" y="566.6" font-family="Liberation Sans" font-weight="bold" font-size="8.5" fill="#222">1</text>
 <path d="M1020.5 546v24" stroke="#c8c8c8" stroke-width="0.8"/>
</svg>

<!--/BOT-->
<!--UI-->
<div class="u" style="left:426.7px;top:8.8px;font-size:9.8px;color:#ffffff;transform:scaleX(0.954)">Loving Hands Child Care Center&nbsp; - &nbsp;Word</div>
<div class="u" style="left:768.8px;top:9.7px;font-size:8.4px;color:#ffffff;transform:scaleX(0.970)">Josephat Tochukwu</div>
<div class="u" style="left:16.4px;top:35.0px;font-size:9.5px;color:#ffffff;transform:scaleX(0.898)">File</div>
<div class="u" style="left:57.7px;top:35.0px;font-size:9.5px;color:#2b579a;transform:scaleX(1.026)">Home</div>
<div class="u" style="left:105.2px;top:35.0px;font-size:9.5px;color:#ffffff;transform:scaleX(0.989)">Insert</div>
<div class="u" style="left:149.7px;top:35.0px;font-size:9.5px;color:#ffffff;transform:scaleX(0.997)">Design</div>
<div class="u" style="left:200.7px;top:35.0px;font-size:9.5px;color:#ffffff;transform:scaleX(0.981)">Layout</div>
<div class="u" style="left:250.4px;top:35.0px;font-size:9.5px;color:#ffffff;transform:scaleX(0.911)">References</div>
<div class="u" style="left:316.4px;top:35.0px;font-size:9.5px;color:#ffffff;transform:scaleX(1.004)">Mailings</div>
<div class="u" style="left:373.2px;top:35.0px;font-size:9.5px;color:#ffffff;transform:scaleX(0.915)">Review</div>
<div class="u" style="left:423.0px;top:35.0px;font-size:9.5px;color:#ffffff;transform:scaleX(0.974)">View</div>
<div class="u" style="left:464.2px;top:35.0px;font-size:9.5px;color:#ffffff;transform:scaleX(0.998)">Help</div>
<div class="u" style="left:505.4px;top:35.0px;font-size:9.5px;color:#ffffff;transform:scaleX(1.011)">Acrobat</div>
<div class="u" style="left:583.4px;top:35.0px;font-size:9.5px;color:#ffffff;transform:scaleX(1.026)">Tell me what you want to do</div>
<div class="u" style="left:946.2px;top:35.6px;font-size:10.2px;color:#ffffff;font-weight:bold;transform:scaleX(0.950)">Share</div>
<div class="u" style="left:11.7px;top:86.9px;font-size:9px;color:#333333;transform:scaleX(0.952)">Paste</div>
<div class="u" style="left:5.6px;top:116.3px;font-size:8.2px;color:#444444;transform:scaleX(1.027)">Clipboard</div>
<div class="u" style="left:70.9px;top:66.8px;font-size:9.6px;color:#333333;transform:scaleX(0.955)">Georgia</div>
<div class="u" style="left:157.0px;top:66.8px;font-size:9.6px;color:#333333;transform:scaleX(0.937)">16</div>
<div class="u" style="left:159.5px;top:116.3px;font-size:8.2px;color:#444444;transform:scaleX(0.982)">Font</div>
<div class="u" style="left:353.3px;top:116.3px;font-size:8.2px;color:#444444;transform:scaleX(0.970)">Paragraph</div>
<div class="u" style="left:615.5px;top:116.3px;font-size:8.2px;color:#444444;transform:scaleX(0.906)">Styles</div>
<div class="u" style="left:483.8px;top:68.9px;font-size:10.5px;color:#262626;transform:scaleX(0.935)">AaBbCcDd</div>
<div class="u" style="left:541.2px;top:68.2px;font-size:12px;color:#1f1f1f;font-family:'Liberation Serif',serif;transform:scaleX(0.974)">AaBbCcD</div>
<div class="u" style="left:598.9px;top:68.9px;font-size:10.5px;color:#262626;transform:scaleX(0.939)">AaBbCcDd</div>
<div class="a" style="left:656.3px;top:63.9px;width:49.2px;height:21.0px;overflow:hidden"><div class="u" style="left:0;top:3px;font-size:15px;color:#3864ab;transform:scaleX(0.930)">AaBbCc</div></div>
<div class="a" style="left:713.7px;top:65.4px;width:49.3px;height:18.7px;overflow:hidden"><div class="u" style="left:0;top:3px;font-size:12.7px;color:#4a78c2;transform:scaleX(0.924)">AaBbCcD</div></div>
<div class="u" style="left:488.8px;top:89.7px;font-size:9px;color:#555;transform:scaleX(1.040)">¶ Normal</div>
<div class="u" style="left:545.9px;top:89.7px;font-size:9px;color:#555;transform:scaleX(1.014)">Body Text</div>
<div class="u" style="left:599.2px;top:89.7px;font-size:9px;color:#555;transform:scaleX(1.029)">No Spacing</div>
<div class="u" style="left:659.2px;top:89.7px;font-size:9px;color:#555;transform:scaleX(1.040)">Heading 1</div>
<div class="u" style="left:716.9px;top:89.7px;font-size:9px;color:#555;transform:scaleX(1.050)">Heading 2</div>
<div class="u" style="left:819.0px;top:59.8px;font-size:10px;color:#333333;transform:scaleX(0.894)">Find</div>
<div class="u" style="left:819.0px;top:77.7px;font-size:10px;color:#333333;transform:scaleX(0.864)">Replace</div>
<div class="u" style="left:819.0px;top:95.8px;font-size:10px;color:#333333;transform:scaleX(0.885)">Select</div>
<div class="u" style="left:817.8px;top:116.3px;font-size:8.2px;color:#444444;transform:scaleX(1.030)">Editing</div>
<div class="u" style="left:883.8px;top:86.9px;font-size:10px;color:#333333;transform:scaleX(0.896)">Create</div>
<div class="u" style="left:885.0px;top:99.8px;font-size:10px;color:#333333;transform:scaleX(0.868)">a PDF</div>
<div class="u" style="left:869.0px;top:116.3px;font-size:8.2px;color:#444444;transform:scaleX(1.029)">Adobe Acrobat</div>
<div class="u" style="left:935.8px;top:86.9px;font-size:10px;color:#333333;transform:scaleX(0.982)">Add-ins</div>
<div class="u" style="left:937.4px;top:116.3px;font-size:8.2px;color:#444444;transform:scaleX(1.030)">Add-ins</div>
<div class="u" style="left:9.1px;top:525.4px;font-size:9.2px;color:#444444;transform:scaleX(0.888)">Page 20 of 20</div>
<div class="u" style="left:74.5px;top:525.4px;font-size:9.2px;color:#444444;transform:scaleX(0.925)">3263 words</div>
<div class="u" style="left:158.6px;top:525.4px;font-size:9.2px;color:#444444;transform:scaleX(0.935)">Afar (Djibouti)</div>
<div class="u" style="left:271.1px;top:525.4px;font-size:9.2px;color:#333333;font-weight:bold;transform:scaleX(0.905)">Accessibility: Investigate</div>
<div class="u" style="left:996.0px;top:525.5px;font-size:9.2px;color:#444444;transform:scaleX(0.908)">55%</div>
<div class="u" style="left:902.5px;top:545.4px;font-size:9.4px;color:#222;transform:scaleX(0.856)">ENG</div>
<div class="u" style="left:905.4px;top:560.0px;font-size:9.4px;color:#222;transform:scaleX(0.867)">US</div>
<div class="u" style="left:933.1px;top:543.9px;font-size:9.4px;color:#222;transform:scaleX(1.028)">11:15 AM</div>
<div class="u" style="left:929.0px;top:560.9px;font-size:9.4px;color:#222;transform:scaleX(1.040)">12/20/2025</div>
<!--/UI-->
</body></html>
